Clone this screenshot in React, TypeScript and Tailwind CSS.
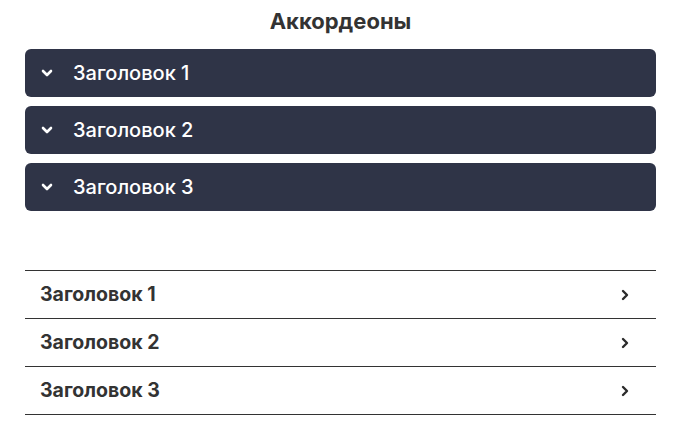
import React from "react"

const items = ["Заголовок 1", "Заголовок 2", "Заголовок 3"]

const ChevronDown = () => (
  <svg width="12" height="12" viewBox="0 0 12 12" fill="none">
    <path d="M2 4l4 4 4-4" stroke="white" strokeWidth="2.6" strokeLinecap="round" strokeLinejoin="round" />
  </svg>
)

const ChevronRight = () => (
  <svg width="12" height="12" viewBox="0 0 12 12" fill="none">
    <path d="M4 2l4 4-4 4" stroke="#2b2b2b" strokeWidth="2.4" strokeLinecap="round" strokeLinejoin="round" />
  </svg>
)

export default function App() {
  return (
    <div className="w-[681px] h-[448px] bg-white px-[25px] pt-[7px] font-['Inter',sans-serif]">
      <h1 className="text-center text-[22px] font-bold text-[#333333] leading-[28px]">Аккордеоны</h1>
      <div className="mt-[14px] flex flex-col gap-[9px]">
        {items.map((item) => (
          <div
            key={item}
            className="h-[48px] rounded-[6px] bg-[#2f3447] flex items-center pl-[16px] gap-[20px] text-white text-[20px] font-medium"
          >
            <ChevronDown />
            <span>{item}</span>
          </div>
        ))}
      </div>
      <div className="mt-[59px] border-t border-[#333333]">
        {items.map((item) => (
          <div
            key={item}
            className="h-[48px] border-b border-[#333333] flex items-center justify-between pl-[15px] pr-[25px]"
          >
            <span className="text-[19.5px] font-bold text-[#333333]">{item}</span>
            <ChevronRight />
          </div>
        ))}
      </div>
    </div>
  )
}
